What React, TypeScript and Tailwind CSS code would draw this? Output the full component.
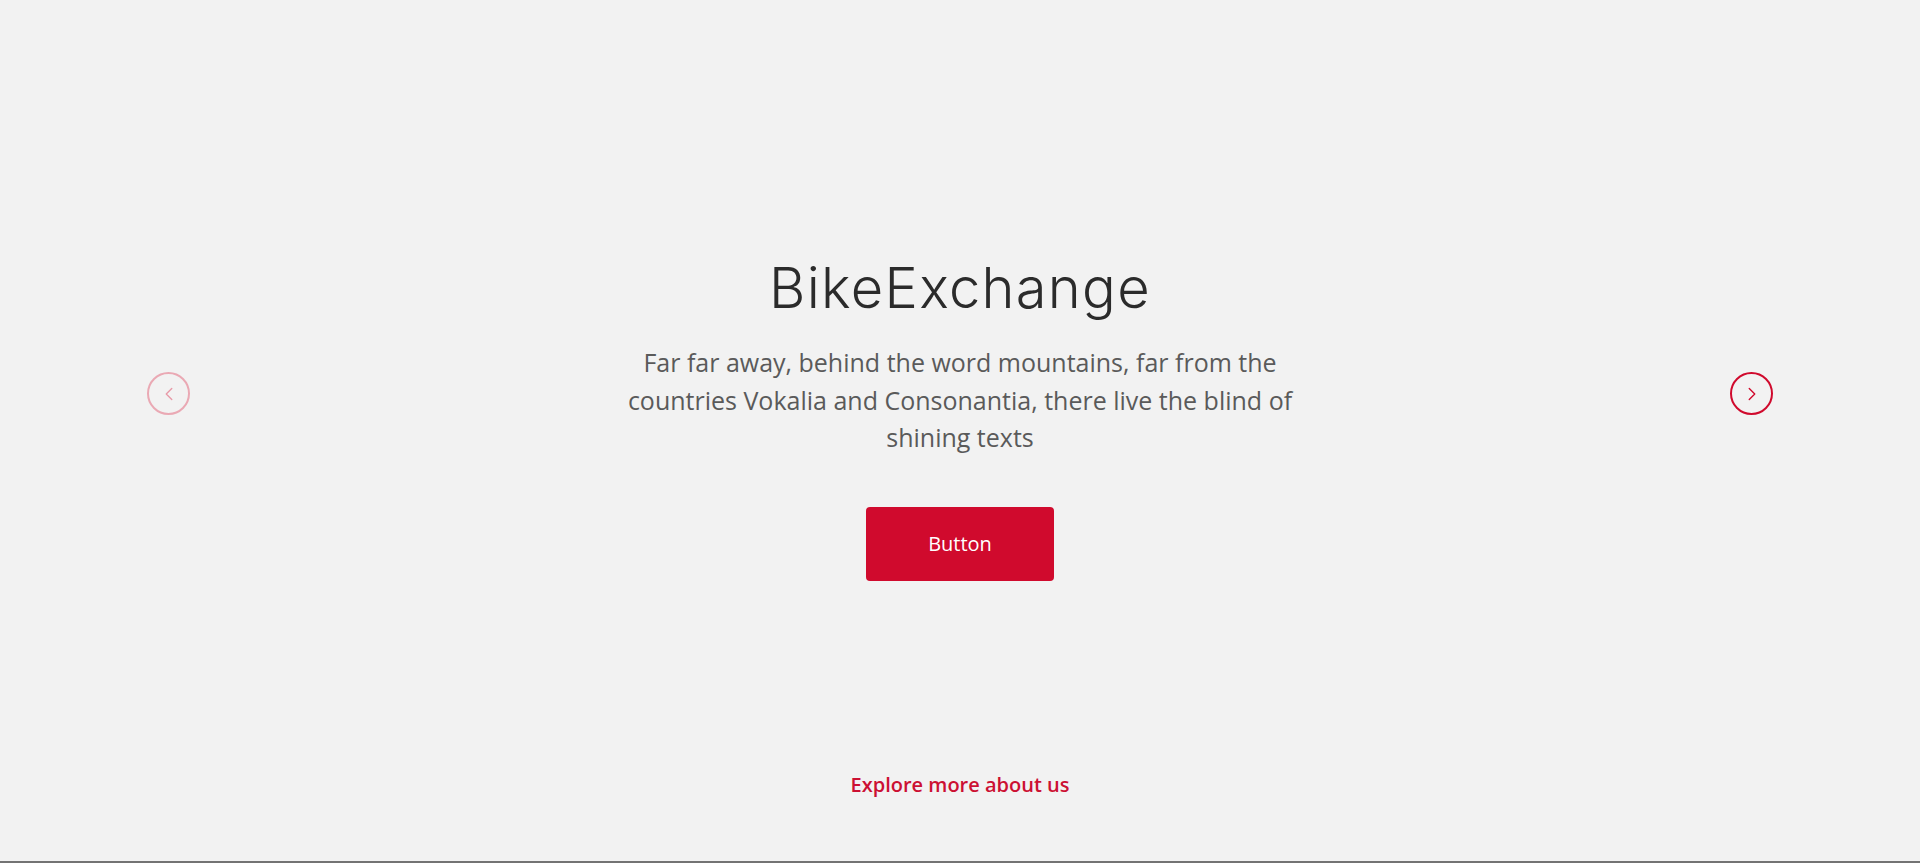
import { ChevronLeft, ChevronRight } from "lucide-react";

export default function App() {
    return (
        <div className="min-h-[863px] bg-[#f2f2f2] border-b-2 border-[#737373] flex flex-col items-center font-['Open_Sans',sans-serif]">
            <div className="w-full flex items-start justify-between px-[147px] pt-[260px]">
                <button
                    type="button"
                    aria-label="Previous"
                    className="mt-[112px] w-[43px] h-[43px] rounded-full border-2 border-[#eaa9b4] flex items-center justify-center text-[#e89aa8]"
                >
                    <ChevronLeft size={22} strokeWidth={1.5} />
                </button>

                <div className="flex flex-col items-center text-center">
                    <h1 className="font-['Inter',sans-serif] font-[350] text-[56px] leading-none tracking-[1.3px] text-[#2b2b2b]">
                        BikeExchange
                    </h1>
                    <p className="mt-[28px] max-w-[720px] text-[25px] leading-[37.5px] text-[#5a5a5a]">
                        Far far away, behind the word mountains, far from the
                        countries Vokalia and Consonantia, there live the blind
                        of shining texts
                    </p>
                    <button
                        type="button"
                        className="mt-[50px] w-[188px] h-[74px] rounded-[4px] bg-[#d00a2d] text-white text-[20px]"
                    >
                        Button
                    </button>
                </div>

                <button
                    type="button"
                    aria-label="Next"
                    className="mt-[112px] w-[43px] h-[43px] rounded-full border-2 border-[#d00a2d] flex items-center justify-center text-[#d00a2d]"
                >
                    <ChevronRight size={22} strokeWidth={1.5} />
                </button>
            </div>

            <a
                href="#"
                className="mt-[189px] text-[20px] leading-[30px] font-semibold text-[#cc1033]"
            >
                Explore more about us
            </a>
        </div>
    );
}
